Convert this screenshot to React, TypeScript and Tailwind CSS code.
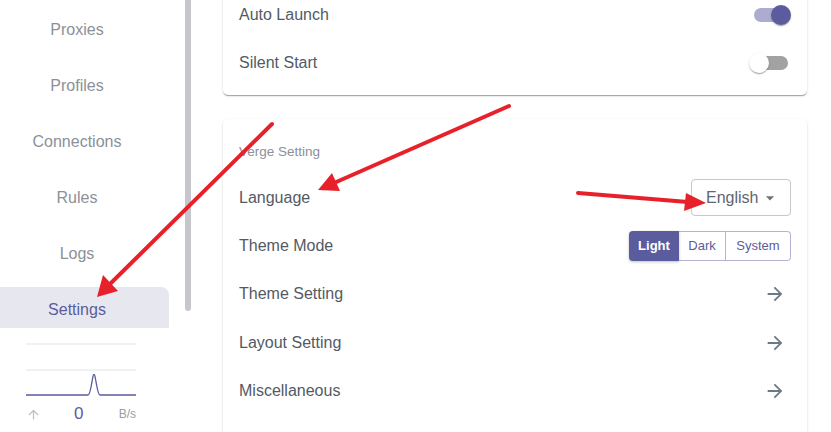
const navItems = ["Proxies", "Profiles", "Connections", "Rules", "Logs", "Settings"];

function Toggle({ on }: { on: boolean }) {
	return (
		<div className="relative h-[20px] w-[40px]">
			<div
				className={`absolute left-[3px] top-[3px] h-[14px] w-[34px] rounded-full ${on ? "bg-[#acacd0]" : "bg-[#a2a2a2]"}`}
			/>
			<div
				className={`absolute top-0 h-[20px] w-[20px] rounded-full shadow-[0_2px_1px_-1px_rgba(0,0,0,0.2),0_1px_1px_0_rgba(0,0,0,0.14),0_1px_3px_0_rgba(0,0,0,0.12)] ${on ? "left-[20px] bg-[#5b5c9d]" : "left-[-2px] bg-white"}`}
			/>
		</div>
	);
}

function ArrowIcon() {
	return (
		<svg viewBox="0 0 24 24" className="h-[22px] w-[22px] fill-[#6c7885]">
			<path d="M12 4l-1.41 1.41L16.17 11H4v2h12.17l-5.58 5.59L12 20l8-8z" />
		</svg>
	);
}

function Row({ label, children }: { label: string; children?: React.ReactNode }) {
	return (
		<div className="flex h-[48.3px] items-center justify-between">
			<span className="text-[16px] text-[#535a64]">{label}</span>
			{children}
		</div>
	);
}

const cardShadow =
	"shadow-[0_2px_1px_-1px_rgba(0,0,0,0.2),0_1px_1px_0_rgba(0,0,0,0.14),0_1px_3px_0_rgba(0,0,0,0.12)]";

export default function App() {
	return (
		<div className="relative flex h-[432px] w-[831px] overflow-hidden bg-white font-['Liberation_Sans',Arial,sans-serif]">
			{/* sidebar */}
			<div className="flex w-[207px] shrink-0">
				<div className="flex w-[185px] flex-col">
					<div className="h-[328px] overflow-hidden pt-[7px]">
						<div className="flex flex-col gap-[10px]">
							{navItems.map((item) => (
								<div
									key={item}
									className={`flex h-[46px] w-[169px] items-center justify-center pr-[15px] text-[16px] ${item === "Settings" ? "rounded-tr-lg bg-[#e7e7f0] text-[#5b5c9d]" : "text-[#8c9099]"}`}
								>
									{item}
								</div>
							))}
						</div>
					</div>
					<div className="flex flex-col pl-[26px] pt-[15px]">
						<svg width="110" height="54" viewBox="0 0 110 54">
							<line x1="0" y1="1" x2="110" y2="1" stroke="#e2e2e2" strokeWidth="1" />
							<line x1="0" y1="27" x2="110" y2="27" stroke="#e2e2e2" strokeWidth="1" />
							<path
								d="M0 52 L62 52 C64 52 65 44 66.5 36 C67.5 30 68.5 30 69.5 36 C71 44 72 52 74 52 L110 52"
								fill="none"
								stroke="#5b5c9d"
								strokeWidth="1.3"
							/>
						</svg>
						<div className="mt-[7px] flex h-[20px] w-[110px] items-center">
							<svg viewBox="0 0 24 24" className="h-[15px] w-[15px] fill-[#c0c0c0]">
								<path d="M4 12l1.41 1.41L11 7.83V20h2V7.83l5.58 5.59L20 12l-8-8-8 8z" />
							</svg>
							<span className="ml-[33px] text-[17px] text-[#5b5c9d]">0</span>
							<span className="ml-auto text-[12px] text-[#9a9ca3]">B/s</span>
						</div>
					</div>
				</div>
				<div className="h-[311px] w-[6px] rounded-b-full bg-[#c6c7cc]" />
			</div>

			{/* main */}
			<div className="flex flex-1 flex-col gap-[24px] pl-[16px] pr-[24px]">
				<div className={`-mt-[29px] rounded-[5px] bg-white px-[16px] pb-[7px] pt-[20px] ${cardShadow}`}>
					<Row label="Auto Launch">
						<Toggle on />
					</Row>
					<Row label="Silent Start">
						<Toggle on={false} />
					</Row>
				</div>

				<div className={`shrink-0 rounded-[5px] bg-white px-[16px] pb-[40px] pt-[25px] ${cardShadow}`}>
					<div className="mb-[14px] h-[16px] text-[13.5px] leading-[16px] text-[#8c9099]">Verge Setting</div>
					<Row label="Language">
						<div className="flex h-[37px] w-[100px] items-center rounded-[4px] border border-[#c8c8c8] pl-[14px] pr-[10px]">
							<span className="text-[16px] text-[#5f6670]">English</span>
							<svg viewBox="0 0 24 24" className="ml-auto h-[20px] w-[20px] fill-[#747474]">
								<path d="M7 10l5 5 5-5z" />
							</svg>
						</div>
					</Row>
					<Row label="Theme Mode">
						<div className="flex h-[30px] text-[13px]">
							<div className="flex w-[50px] items-center justify-center rounded-l-[4px] bg-[#5b5c9d] font-bold text-white shadow-[0_1px_3px_rgba(0,0,0,0.25)]">
								Light
							</div>
							<div className="flex w-[47px] items-center justify-center border-y border-r border-[#b3b4d4] text-[#5b5c9d]">
								Dark
							</div>
							<div className="flex w-[65px] items-center justify-center rounded-r-[4px] border-y border-r border-[#b3b4d4] text-[#5b5c9d]">
								System
							</div>
						</div>
					</Row>
					<Row label="Theme Setting">
						<div className="mr-[5px]">
							<ArrowIcon />
						</div>
					</Row>
					<Row label="Layout Setting">
						<div className="mr-[5px]">
							<ArrowIcon />
						</div>
					</Row>
					<Row label="Miscellaneous">
						<div className="mr-[5px]">
							<ArrowIcon />
						</div>
					</Row>
				</div>
			</div>

			{/* annotation arrows drawn over the screenshot */}
			<svg className="pointer-events-none absolute left-0 top-0" width="831" height="432" viewBox="0 0 831 432">
				<g stroke="#e8202a" strokeWidth="4" strokeLinecap="round" fill="#e8202a">
					<line x1="272" y1="124" x2="110" y2="284" />
					<line x1="509" y1="106" x2="334" y2="183" />
					<line x1="578" y1="193" x2="688" y2="202" />
				</g>
				<g fill="#e8202a">
					<polygon points="97,297 103,275 118,291" />
					<polygon points="318,190 332,173 340,191" />
					<polygon points="706,203 686,193 684,211" />
				</g>
			</svg>
		</div>
	);
}
